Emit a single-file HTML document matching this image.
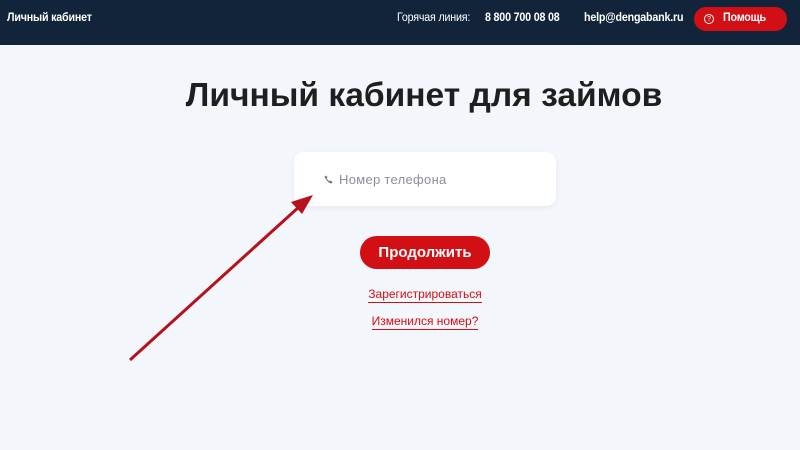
<!DOCTYPE html>
<html><head><meta charset="utf-8"><style>
*{margin:0;padding:0;box-sizing:border-box}
body{width:800px;height:450px;background:#f3f6fa;font-family:"Liberation Sans",sans-serif;position:relative;overflow:hidden}
.hd{position:absolute;left:0;top:0;width:800px;height:45px;background:#12243a;color:#fff;font-size:11.5px}
.hd span{position:absolute;top:12px;letter-spacing:-0.2px;transform:scaleX(0.93);transform-origin:left;white-space:nowrap}
.help{position:absolute;left:694px;top:7px;width:93px;height:24px;background:#d10f14;border-radius:12px;color:#fff;font-size:11px;font-weight:bold}
h1{position:absolute;left:0;width:848px;text-align:center;top:77px;font-size:33.6px;font-weight:bold;color:#1f1f1f}
.inp{position:absolute;left:294px;top:152px;width:262px;height:54px;background:#fff;border-radius:10px;box-shadow:0 2px 6px rgba(0,0,0,.05)}
.inp span{position:absolute;left:45px;top:20px;font-size:13px;color:#8a8f98;letter-spacing:.3px}
.btn{position:absolute;left:360px;top:236px;width:130px;height:33px;background:#d10f14;border-radius:17px;color:#fff;font-size:15px;font-weight:bold;text-align:center;line-height:33px}
.lk{position:absolute;left:0;width:850px;text-align:center;font-size:12px;color:#d10f14}
.lk span{border-bottom:1px solid #d10f14;padding-bottom:1px}
</style></head><body>
<div class="hd">
<span style="left:7px;font-weight:bold">Личный кабинет</span>
<span style="left:397px">Горячая линия:</span>
<span style="left:485px;font-weight:bold">8 800 700 08 08</span>
<span style="left:584px;font-weight:bold">help@dengabank.ru</span>
<div class="help"><span style="position:absolute;left:10px;top:7px;border:1px solid #fff;border-radius:50%;width:10px;height:10px;line-height:9px;text-align:center;font-size:7px;font-weight:normal;transform:none">?</span><span style="position:absolute;left:29px;top:5px;font-size:11.5px">Помощь</span></div>
</div>
<h1>Личный кабинет для займов</h1>
<div class="inp"><svg style="position:absolute;left:30px;top:23px" width="9" height="9" viewBox="0 0 10 10"><path d="M2 0.5 L4 2.5 L3 4 Q4.5 6 6 7 L7.5 6 L9.5 8 L8 9.5 Q4 9 0.5 2 Z" fill="#777"/></svg><span>Номер телефона</span></div>
<div class="btn">Продолжить</div>
<div class="lk" style="top:287px"><span>Зарегистрироваться</span></div>
<div class="lk" style="top:314px"><span>Изменился номер?</span></div>
<svg style="position:absolute;left:0;top:0" width="800" height="450"><line x1="130" y1="360" x2="300" y2="206" stroke="#b5121b" stroke-width="3"/><polygon points="313,195 291,202 302,214" fill="#b5121b"/></svg>
</body></html>
